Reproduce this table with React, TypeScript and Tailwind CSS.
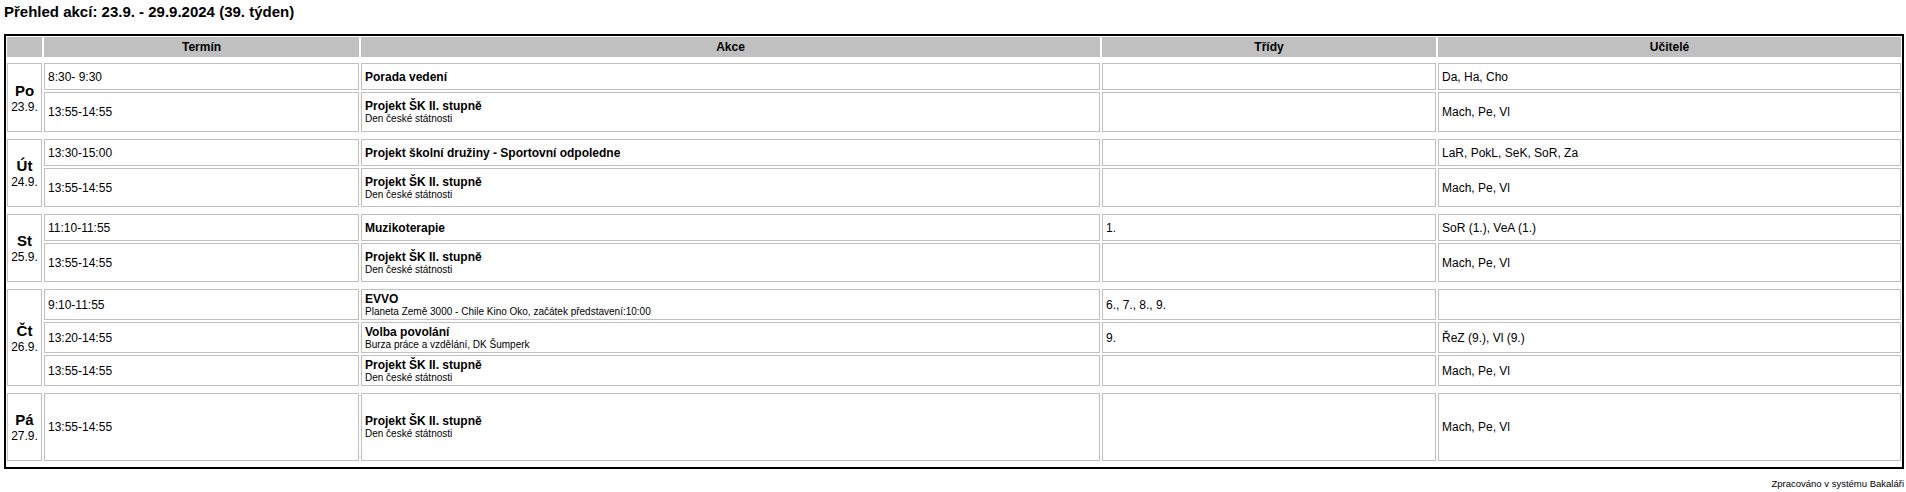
import React from 'react';

interface EventRow {
  time: string;
  title: string;
  note?: string;
  classes: string;
  teachers: string;
}

interface DayGroup {
  day: string;
  date: string;
  rows: string; // grid rows class
  events: EventRow[];
}

const projektSK = (): EventRow => ({
  time: '13:55-14:55',
  title: 'Projekt ŠK II. stupně',
  note: 'Den české státnosti',
  classes: '',
  teachers: 'Mach, Pe, Vl',
});

const days: DayGroup[] = [
  {
    day: 'Po',
    date: '23.9.',
    rows: 'grid-rows-[27px_40px]',
    events: [
      { time: '8:30- 9:30', title: 'Porada vedení', classes: '', teachers: 'Da, Ha, Cho' },
      projektSK(),
    ],
  },
  {
    day: 'Út',
    date: '24.9.',
    rows: 'grid-rows-[27px_39px]',
    events: [
      {
        time: '13:30-15:00',
        title: 'Projekt školní družiny - Sportovní odpoledne',
        classes: '',
        teachers: 'LaR, PokL, SeK, SoR, Za',
      },
      projektSK(),
    ],
  },
  {
    day: 'St',
    date: '25.9.',
    rows: 'grid-rows-[27px_39px]',
    events: [
      { time: '11:10-11:55', title: 'Muzikoterapie', classes: '1.', teachers: 'SoR (1.), VeA (1.)' },
      projektSK(),
    ],
  },
  {
    day: 'Čt',
    date: '26.9.',
    rows: 'grid-rows-[31px_31px_31px]',
    events: [
      {
        time: '9:10-11:55',
        title: 'EVVO',
        note: 'Planeta Země 3000 - Chile Kino Oko, začátek představení:10:00',
        classes: '6., 7., 8., 9.',
        teachers: '',
      },
      {
        time: '13:20-14:55',
        title: 'Volba povolání',
        note: 'Burza práce a vzdělání, DK Šumperk',
        classes: '9.',
        teachers: 'ŘeZ (9.), Vl (9.)',
      },
      projektSK(),
    ],
  },
  {
    day: 'Pá',
    date: '27.9.',
    rows: 'grid-rows-[68px]',
    events: [projektSK()],
  },
];

const cols = 'grid grid-cols-[35px_315px_739px_334px_463px] gap-[2px]';
const cell = 'border border-[#c0c0c0] bg-white flex items-center px-[3px] text-[12px] leading-[14px]';

const App: React.FC = () => {
  return (
    <div className="w-[1906px] bg-white text-black font-['Liberation_Sans',Arial,sans-serif]">
      <h1 className="pt-[3px] pl-[4px] text-[15px] leading-[17px] font-bold">
        Přehled akcí: 23.9. - 29.9.2024 (39. týden)
      </h1>

      <div className="mt-[14px] ml-[4px] mr-[2px] border-2 border-black pt-[1px] px-[1px] pb-[6px]">
        {/* header */}
        <div className={`${cols} h-[20px]`}>
          <div className="bg-[#c0c0c0]" />
          {['Termín', 'Akce', 'Třídy', 'Učitelé'].map((h) => (
            <div
              key={h}
              className="bg-[#c0c0c0] flex items-center justify-center text-[12px] font-bold"
            >
              {h}
            </div>
          ))}
        </div>

        <div className="mt-[6px] flex flex-col gap-[7px]">
          {days.map((d) => (
            <div key={d.day} className={`${cols} ${d.rows}`}>
              <div
                className="border border-[#c0c0c0] bg-white flex flex-col items-center justify-center"
                style={{ gridRow: `1 / span ${d.events.length}` }}
              >
                <span className="text-[15px] leading-[18px] font-bold">{d.day}</span>
                <span className="text-[12px] leading-[14px]">{d.date}</span>
              </div>
              {d.events.map((e, i) => (
                <React.Fragment key={i}>
                  <div className={cell}>{e.time}</div>
                  <div className={`${cell} flex-col !items-start justify-center`}>
                    <span className="font-bold">{e.title}</span>
                    {e.note && <span className="text-[10px] leading-[12px]">{e.note}</span>}
                  </div>
                  <div className={cell}>{e.classes}</div>
                  <div className={cell}>{e.teachers}</div>
                </React.Fragment>
              ))}
            </div>
          ))}
        </div>
      </div>

      <div className="mt-[9px] pr-[2px] text-right text-[9.5px] leading-[11px]">
        Zpracováno v systému Bakaláři
      </div>
    </div>
  );
};

export default App;
